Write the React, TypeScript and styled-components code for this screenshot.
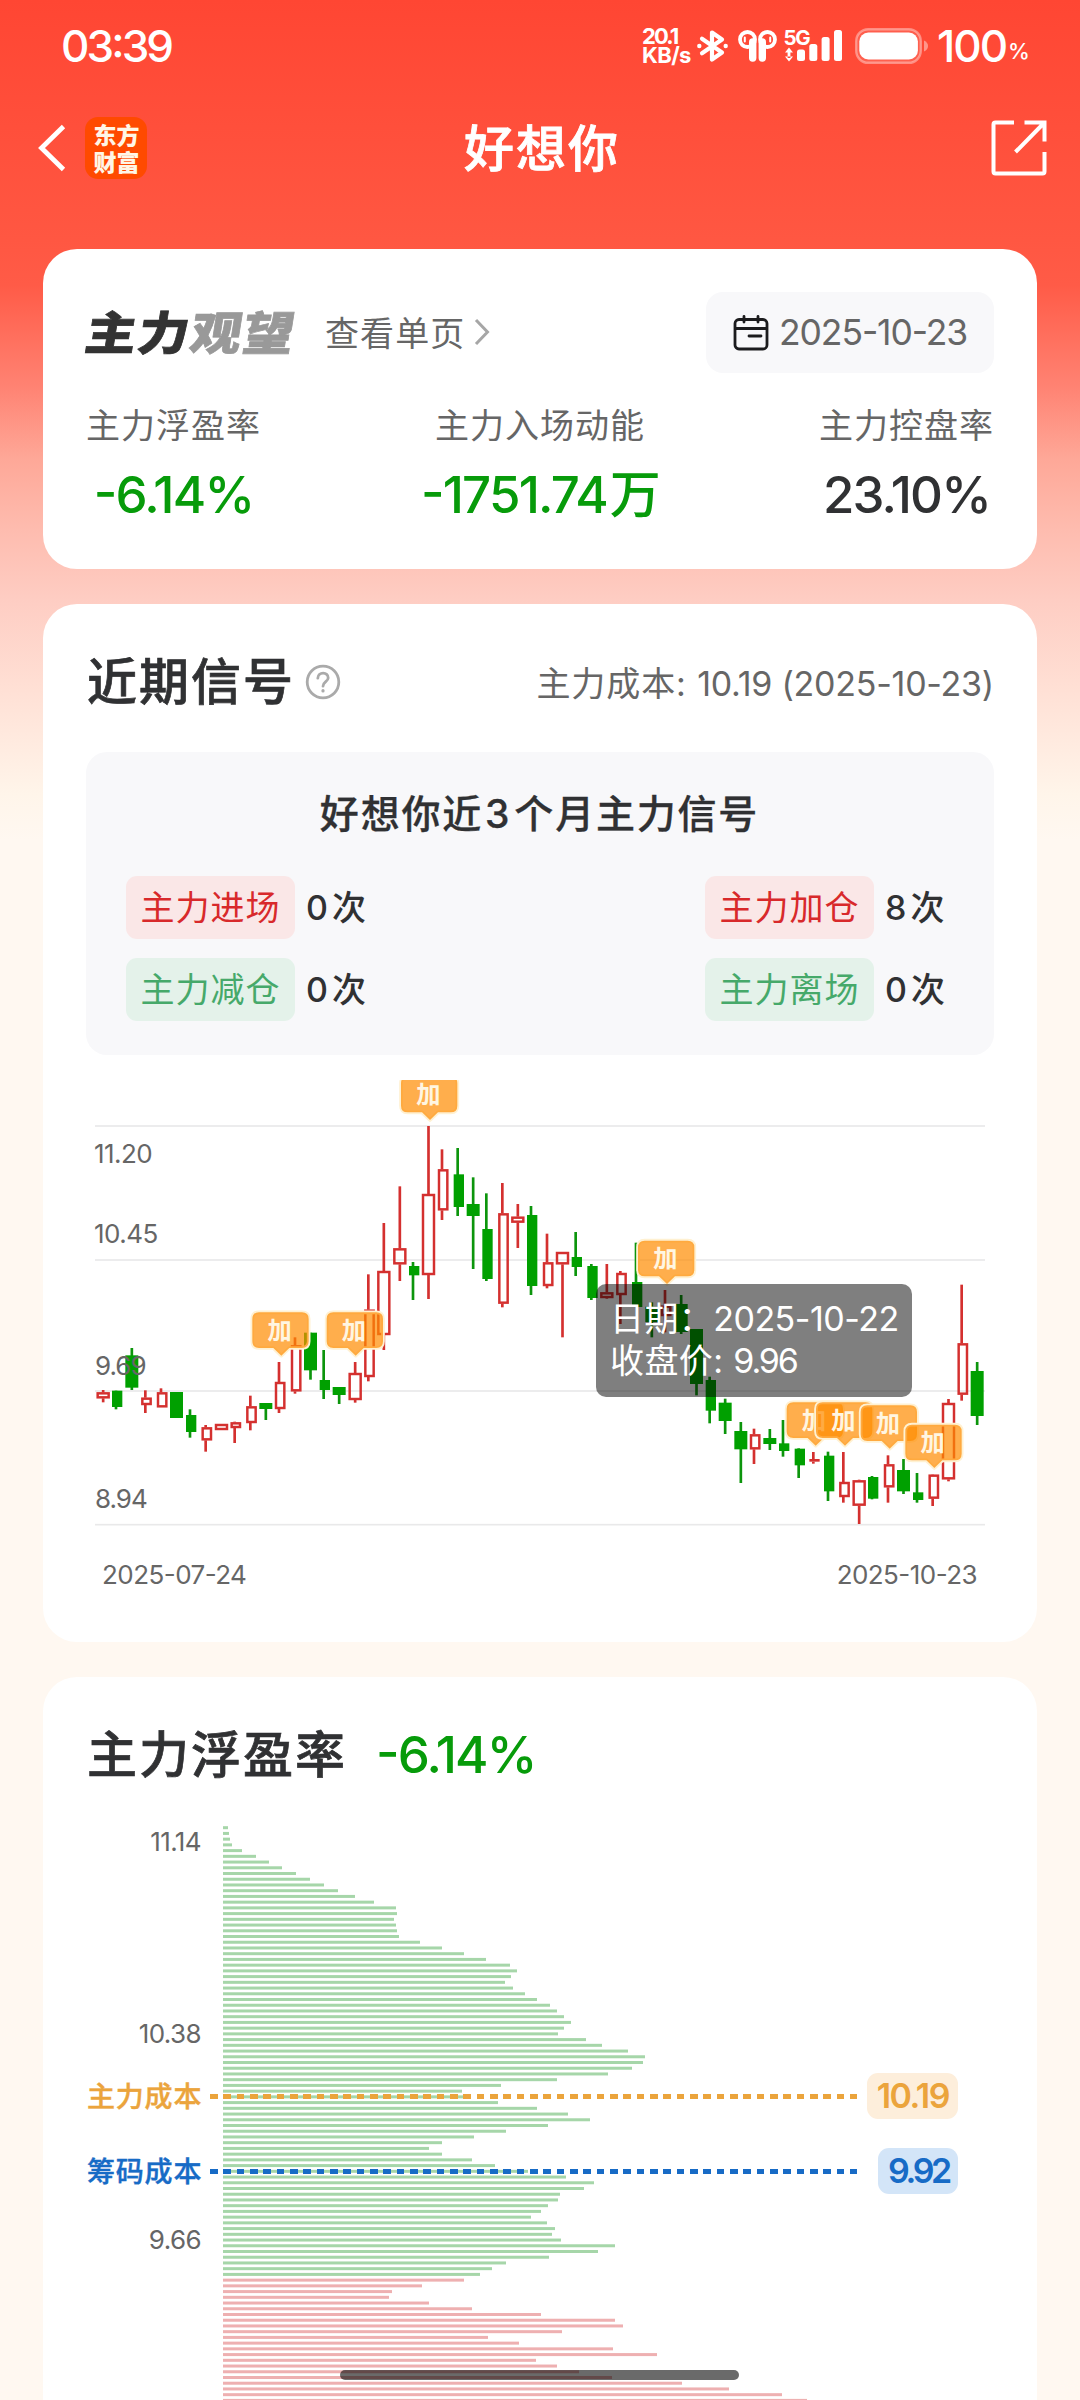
import React from 'react';
import styled, { createGlobalStyle } from 'styled-components';

const sans = '"Inter", "Noto Sans CJK SC", sans-serif';
const GREEN = '#079b0a';
const RED = '#d4302f';
const INK = '#303133';
const GREY = '#666';

const GlobalStyle = createGlobalStyle`
  * { box-sizing: border-box; }
  body { margin: 0; font-family: ${sans}; color: ${INK}; }
`;

const Page = styled.div`
  position: relative;
  width: 1080px;
  height: 2400px;
  overflow: hidden;
  background: linear-gradient(
    180deg,
    #ff4633 0px, #ff5742 240px, #ff5b47 285px, #ff8272 385px,
    #fea898 460px, #febcaf 530px, #fecdc3 600px, #ffe0d5 690px,
    #fff5ea 795px, #fff8f1 840px, #fff8f1 2400px
  );
`;

/* ---------- status bar ---------- */
const StatusBar = styled.div`
  display: flex;
  align-items: center;
  justify-content: space-between;
  height: 91px;
  padding: 0 53px 0 61px;
  color: #fff;
`;
const Clock = styled.span`
  font-size: 44px;
  font-weight: 500;
  letter-spacing: -2.9px;
  font-feature-settings: "case";
`;
const StatusIcons = styled.div`
  display: flex;
  align-items: center;
`;
const NetSpeed = styled.div`
  width: 48px;
  margin-right: 7px;
  font-size: 22px;
  line-height: 19px;
  font-weight: 700;
  white-space: nowrap;
`;
const SpeedLine = styled.div<{ $track: number }>`
  letter-spacing: ${(p) => p.$track}px;
`;
const StatusSvg = styled.svg<{ $gap: number }>`
  display: block;
  flex: none;
  overflow: visible;
  margin-right: ${(p) => p.$gap}px;
`;
const Percent = styled.span`
  display: flex;
  align-items: baseline;
  width: 90px;
  font-size: 44px;
  font-weight: 500;
  letter-spacing: -2px;
`;
const PercentSign = styled.span`
  margin-left: 2px;
  font-size: 22px;
  letter-spacing: 0;
  transform: translateY(-3px);
`;

/* ---------- header ---------- */
const Header = styled.header`
  display: grid;
  grid-template-columns: 1fr auto 1fr;
  align-items: center;
  height: 113px;
  margin-bottom: 45px;
  padding: 0 33px 0 37px;
`;
const HeaderLeft = styled.div`
  display: flex;
  align-items: center;
  gap: 17px;
`;
const AppLogo = styled.div`
  display: flex;
  flex-direction: column;
  justify-content: center;
  width: 62px;
  height: 62px;
  padding-left: 1px;
  border-radius: 13px;
  background: #ff4a00;
  color: #fff6e6;
  font: 900 23px/27px "Noto Sans CJK SC", sans-serif;
  text-align: center;
`;
const Title = styled.h1`
  margin: 0;
  padding-bottom: 5px;
  color: #fff;
  font-size: 50px;
  font-weight: 500;
  letter-spacing: 2px;
  -webkit-text-stroke: 0.8px currentColor;
`;
const HeaderRight = styled.div`
  display: flex;
  justify-content: flex-end;
`;

/* ---------- cards ---------- */
const Cards = styled.main`
  display: flex;
  flex-direction: column;
  gap: 35px;
  padding: 0 43px;
`;
const Card = styled.section<{ $bottom?: number }>`
  padding: 43px 43px ${(p) => p.$bottom ?? 0}px;
  border-radius: 34px;
  background: #fff;
`;
const Row = styled.div<{ $height: number }>`
  display: flex;
  align-items: center;
  justify-content: space-between;
  height: ${(p) => p.$height}px;
`;
const Group = styled.div<{ $gap: number }>`
  display: flex;
  align-items: center;
  gap: ${(p) => p.$gap}px;
`;

const StateMark = styled.div`
  width: 212px;
  padding-bottom: 5px;
  font: 900 51px/60px "Noto Sans CJK SC", sans-serif;
  letter-spacing: 1.5px;
  color: #333;
  white-space: nowrap;
  -webkit-text-stroke: 0.8px currentColor;
  transform: skewX(-9deg) scaleY(0.9);
`;
const Faded = styled.span`
  color: #999;
`;
const PageLink = styled.a`
  display: flex;
  align-items: center;
  gap: 9px;
  padding-bottom: 2px;
  color: ${GREY};
  font-size: 34px;
  letter-spacing: 1.1px;
`;
const DatePill = styled.div`
  display: flex;
  align-items: center;
  gap: 10px;
  width: 288px;
  height: 81px;
  padding-left: 27px;
  border-radius: 17px;
  background: #f8f8fa;
  color: ${GREY};
  font-size: 35.5px;
  letter-spacing: -1.1px;
  font-feature-settings: "case";
  white-space: nowrap;
`;

const Metrics = styled.div`
  display: flex;
  justify-content: space-between;
  margin-top: 29px;
`;
const Metric = styled.div`
  display: flex;
  flex-direction: column;
  align-items: center;
  gap: 15px;
`;
const MetricLabel = styled.div`
  color: ${GREY};
  font-size: 34px;
  line-height: 48px;
  letter-spacing: 1px;
`;
const MetricValue = styled.div<{ $color: string }>`
  color: ${(p) => p.$color};
  font-size: 51px;
  font-weight: 500;
  line-height: 60px;
  letter-spacing: -1.8px;
  font-feature-settings: "case";
  white-space: nowrap;
`;
const Unit = styled.span`
  margin-left: 3px;
`;

const SectionTitle = styled.h2`
  margin: 0;
  padding-left: 1px;
  font-size: 50px;
  font-weight: 500;
  letter-spacing: 2px;
  line-height: 70px;
  -webkit-text-stroke: 0.7px currentColor;
`;
const CostNote = styled.div`
  padding-bottom: 2px;
  color: ${GREY};
  font-size: 34px;
  letter-spacing: 0.9px;
`;
const Tight = styled.span`
  letter-spacing: -0.25px;
`;

/* ---------- signal summary ---------- */
const Panel = styled.div`
  margin-top: 35px;
  padding: 37px 49px 34px 40px;
  border-radius: 21px;
  background: #f8f8fa;
`;
const PanelTitle = styled.div`
  margin-bottom: 37px;
  padding-left: 8px;
  font-size: 39px;
  font-weight: 500;
  line-height: 50px;
  letter-spacing: 1.8px;
  text-align: center;
  -webkit-text-stroke: 0.3px currentColor;
`;
const Months = styled.span`
  margin: 0 3px 0 2px;
`;
const SignalGrid = styled.div`
  display: grid;
  grid-template-columns: auto auto;
  justify-content: space-between;
  row-gap: 19px;
`;
const Tag = styled.span<{ $kind: 'in' | 'out' }>`
  width: 169px;
  height: 63px;
  border-radius: 11px;
  background: ${(p) => (p.$kind === 'in' ? '#fae7e7' : '#e4f2ea')};
  color: ${(p) => (p.$kind === 'in' ? '#d8292b' : '#46a96a')};
  font-size: 34px;
  line-height: 64px;
  letter-spacing: 1px;
  text-align: center;
`;
const Count = styled.span`
  display: flex;
  align-items: baseline;
  gap: 4px;
  width: 60px;
  font-size: 34px;
  font-weight: 500;
  line-height: 63px;
`;

/* ---------- charts ---------- */
const ChartBox = styled.div<{ $top: number; $height: number }>`
  position: relative;
  height: ${(p) => p.$height}px;
  margin-top: ${(p) => p.$top}px;
`;
const ChartSvg = styled.svg`
  display: block;
  font-family: ${sans};
`;
const Tooltip = styled.div`
  position: absolute;
  left: 510px;
  top: 204px;
  width: 316px;
  height: 113px;
  padding: 14px 0 0 14px;
  border-radius: 10px;
  background: rgba(0, 0, 0, 0.5);
  color: #fff;
  font-size: 34px;
  line-height: 42px;
  letter-spacing: -0.5px;
  white-space: nowrap;
`;
const Wide = styled.span`
  letter-spacing: 0.4px;
`;
const Price = styled.span`
  letter-spacing: -2.2px;
`;
const DateAxis = styled.div`
  display: flex;
  justify-content: space-between;
  margin-top: 27px;
  padding: 0 17px 0 16px;
  color: ${GREY};
  font-size: 26px;
  line-height: 36px;
  letter-spacing: -0.55px;
  font-feature-settings: "case";
`;
const CostLine = styled.div<{ $top: number; $color: string }>`
  position: absolute;
  left: 0;
  top: ${(p) => p.$top}px;
  display: flex;
  align-items: center;
  width: 872px;
  height: 46px;
  color: ${(p) => p.$color};
`;
const CostLabel = styled.span`
  width: 124px;
  padding: 0 0 2px 1px;
  font-size: 28px;
  font-weight: 500;
  letter-spacing: 0.8px;
  white-space: nowrap;
  -webkit-text-stroke: 0.4px currentColor;
`;
const Dashes = styled.span`
  width: 647px;
  height: 5px;
  background: repeating-linear-gradient(90deg, currentColor 0 7.7px, transparent 7.7px 13.33px);
`;
const CostBadge = styled.span<{ $bg: string; $track: number }>`
  margin-left: auto;
  padding: 0 9px 0 10px;
  border-radius: 11px;
  background: ${(p) => p.$bg};
  font-size: 34px;
  font-weight: 600;
  line-height: 46px;
  letter-spacing: ${(p) => p.$track}px;
`;
const HomeIndicator = styled.div`
  position: absolute;
  left: 340px;
  top: 2370px;
  width: 399px;
  height: 10px;
  border-radius: 5px;
  background: rgba(0, 0, 0, 0.585);
`;

/* Candles on a 3x grid: left edge, body width, high, body top, body bottom, low, rising */
type Candle = [number, number, number, number, number, number, 0 | 1];
const W = 39;
const N = 31;
const candles: Candle[] = [
  [50, W, 990, 997, 1015, 1027, 1], [96, N, 992, 992, 1041, 1048, 0], [136, W, 864, 886, 983, 990, 0],
  [184, N, 991, 1013, 1035, 1059, 1], [231, N, 985, 997, 1042, 1042, 1], [270, W, 996, 996, 1074, 1074, 0],
  [318, N, 1048, 1065, 1116, 1133, 0], [365, N, 1095, 1102, 1141, 1175, 1], [405, W, 1092, 1092, 1110, 1110, 1],
  [452, N, 1085, 1087, 1104, 1149, 1], [499, N, 1007, 1039, 1089, 1111, 1], [538, W, 1029, 1029, 1047, 1080, 0],
  [585, N, 906, 966, 1047, 1059, 1], [633, N, 832, 856, 994, 1001, 1], [672, W, 818, 818, 931, 959, 0],
  [719, N, 870, 960, 990, 1017, 0], [758, W, 981, 981, 1005, 1032, 0], [806, W, 906, 939, 1020, 1028, 1],
  [853, N, 643, 749, 951, 964, 1], [892, W, 489, 633, 825, 870, 1], [940, W, 379, 565, 613, 663, 1],
  [987, N, 606, 618, 646, 720, 0], [1026, W, 198, 402, 645, 717, 1], [1074, N, 268, 328, 451, 480, 1],
  [1121, N, 264, 343, 441, 468, 0], [1160, W, 352, 432, 468, 627, 0], [1207, N, 400, 507, 657, 663, 0],
  [1255, N, 369, 460, 731, 742, 1], [1294, W, 432, 470, 488, 564, 1], [1341, N, 438, 465, 678, 705, 0],
  [1389, N, 521, 607, 678, 685, 1], [1428, W, 576, 576, 613, 832, 1], [1475, N, 516, 591, 621, 648, 0],
  [1522, N, 612, 618, 714, 720, 0], [1561, W, 612, 697, 714, 716, 1], [1609, N, 633, 639, 705, 792, 1],
  [1656, N, 548, 666, 741, 741, 0], [1696, W, 727, 740, 786, 832, 0], [1743, N, 690, 737, 768, 817, 1],
  [1784, W, 705, 732, 816, 822, 0], [1830, W, 807, 807, 972, 1006, 0], [1877, N, 950, 960, 1052, 1090, 0],
  [1916, W, 1016, 1028, 1083, 1122, 0], [1963, W, 1086, 1113, 1168, 1269, 0], [2010, N, 1106, 1123, 1168, 1212, 1],
  [2050, W, 1107, 1134, 1152, 1170, 0], [2097, N, 1080, 1150, 1173, 1190, 0], [2144, N, 1165, 1166, 1216, 1254, 0],
  [2188, N, 1176, 1197, 1205, 1211, 1], [2232, N, 1175, 1187, 1294, 1323, 0], [2278, N, 1176, 1266, 1311, 1328, 1],
  [2318, W, 1259, 1261, 1337, 1392, 1], [2364, N, 1248, 1251, 1316, 1318, 0], [2412, N, 1186, 1213, 1282, 1328, 1],
  [2451, W, 1197, 1230, 1294, 1302, 0], [2499, N, 1239, 1297, 1320, 1328, 0], [2546, N, 1243, 1244, 1316, 1338, 1],
  [2586, W, 1017, 1029, 1258, 1264, 1], [2633, N, 674, 850, 1004, 1022, 1], [2672, W, 906, 933, 1068, 1095, 0],
];

const pins: [number, number][] = [
  [517, 757], [740, 757], [963, 50], [1674, 542], [2120, 1027], [2208, 1027], [2342, 1036], [2476, 1094],
];

function CandleStick({ c }: { c: Candle }) {
  const [x, w, high, top, bottom, low, rising] = c;
  const cx = w === W ? x + w / 2 : x + 12;
  if (!rising) {
    return (
      <g fill="#00a000">
        <rect x={cx - 4} y={high} width={8} height={low - high} fill="#0c950c" />
        <rect x={x} y={top} width={w} height={bottom - top} />
      </g>
    );
  }
  return (
    <g fill={RED}>
      <rect x={cx - 4} y={high} width={8} height={Math.max(0, top - high)} />
      <rect x={cx - 4} y={bottom} width={8} height={Math.max(0, low - bottom)} />
      {bottom - top > 8 ? (
        <rect x={x + 3} y={top + 3} width={w - 6} height={bottom - top - 6} fill="none" stroke={RED} strokeWidth={7.4} />
      ) : (
        <rect x={x} y={top} width={w} height={bottom - top} />
      )}
    </g>
  );
}

function Pin({ x, y }: { x: number; y: number }) {
  const d =
    'M20 0H149Q169 0 169 20V87Q169 107 149 107H111L87 130L63 107H20Q0 107 0 87V20Q0 0 20 0Z';
  return (
    <g transform={`translate(${x} ${y})`}>
      <path d={d} fill="none" stroke="#fff1d2" strokeWidth={11} strokeLinejoin="round" />
      <path d={d} fill="#ff8c00" fillOpacity={0.7} />
      <text x={82} y={80} textAnchor="middle" fontSize={73} fontWeight={700} fill="#fff6e2">加</text>
    </g>
  );
}

function CandleChart() {
  return (
    <ChartSvg width={908} height={450} viewBox="18 60 2724 1350">
      {[198, 600, 993, 1394].map((y) => (
        <rect key={y} x={45} y={y - 2.5} width={2670} height={5} fill="#e9e9ea" />
      ))}
      {candles.map((c) => <CandleStick key={c[0]} c={c} />)}
      {pins.map(([x, y]) => <Pin key={x} x={x} y={y} />)}
      <g fill={GREY} fontSize={78} letterSpacing={-1.6}>
        <text x={42} y={308}>11.20</text>
        <text x={42} y={548}>10.45</text>
        <text x={45} y={944} letterSpacing={-3}>9.69</text>
        <text x={45} y={1343} letterSpacing={-3}>8.94</text>
      </g>
    </ChartSvg>
  );
}

const bars = [
  5, 6, 7, 9, 19, 33, 46, 59, 73, 87, 101, 115, 132, 151, 173, 174, 171, 173, 174, 176, 197, 219, 241, 263, 287,
  294, 288, 282, 290, 302, 314, 327, 334, 341, 348, 341, 335, 363, 379, 405, 422, 420, 409, 385, 334, 278, 239,
  246, 275, 314, 345, 367, 325, 283, 251, 219, 206, 219, 249, 272, 305, 343, 371, 361, 337, 335, 325, 318, 308,
  324, 332, 329, 338, 392, 375, 326, 283, 269, 257, 241, 199, 169, 166, 206, 249, 318, 392, 400, 339, 265, 296,
  390, 434, 313, 334, 356, 389, 459, 506, 559, 584,
];
const FIRST_RED = 79;

function ChipProfile() {
  return (
    <ChartSvg width={908} height={620} viewBox="0 0 908 620">
      {bars.map((w, i) => (
        <rect key={i} x={137} y={6.2 + i * 5.727} width={w} height={3} fill={i < FIRST_RED ? '#a6d6a9' : '#eeb0b1'} />
      ))}
      <g fill={GREY} fontSize={26} letterSpacing={-0.6} textAnchor="end">
        <text x={115} y={31}>11.14</text>
        <text x={115} y={222.5}>10.38</text>
        <text x={115} y={429}>9.66</text>
      </g>
    </ChartSvg>
  );
}

function BluetoothIcon() {
  return (
    <StatusSvg $gap={10} width={31} height={32} viewBox="0 0 31 32" fill="none" stroke="#fff" strokeWidth={4.2} strokeLinecap="round" strokeLinejoin="round">
      <path d="M5 8.8L25 22.5L15 29.5V2.5L25 9.5L5 23.2" />
      <circle cx={2.3} cy={16} r={2.2} fill="#fff" stroke="none" />
      <circle cx={28.7} cy={16} r={2.2} fill="#fff" stroke="none" />
    </StatusSvg>
  );
}

function EarbudsIcon() {
  return (
    <StatusSvg $gap={7} width={39} height={32} viewBox="0 0 39 32" fill="none" stroke="#fff">
      <circle cx={9.5} cy={9.5} r={7.5} strokeWidth={3.8} />
      <circle cx={29.5} cy={9.5} r={7.5} strokeWidth={3.8} />
      <path d="M14.7 12V28M24.3 12V28" strokeWidth={7.4} strokeLinecap="round" />
      <path d="M6.8 7.5V11.5M32.2 7.5V11.5" strokeWidth={2} strokeLinecap="round" />
    </StatusSvg>
  );
}

function SignalIcon() {
  return (
    <StatusSvg $gap={13} width={58} height={33} viewBox="0 0 58 33" fill="#fff">
      <text x={-0.5} y={16} fontFamily='"Inter", sans-serif' fontSize={20.5} fontWeight={700} letterSpacing={-1.4}>5G</text>
      <path d="M5 18.5L9 23.5H1ZM5 32.5L9 27.5H1ZM3.6 22H6.4V29H3.6Z" />
      <rect x={13} y={20.5} width={8} height={11.5} rx={2.5} />
      <rect x={25.3} y={15} width={8} height={17} rx={2.5} />
      <rect x={37.6} y={8} width={8} height={24} rx={2.5} />
      <rect x={50} y={1} width={8} height={31} rx={2.5} />
    </StatusSvg>
  );
}

function BatteryIcon() {
  return (
    <StatusSvg $gap={8} width={74} height={36} viewBox="0 0 74 36">
      <rect x={1.2} y={1.2} width={64.6} height={33.6} rx={12} fill="#fff" fillOpacity={0.12} stroke="#fff" strokeOpacity={0.38} strokeWidth={2.4} />
      <rect x={4.3} y={4.5} width={58.6} height={27} rx={9} fill="#fff" />
      <path d="M69 12.5Q73 14.5 73 18T69 23.5Z" fill="#fff" fillOpacity={0.42} />
    </StatusSvg>
  );
}

function SignalItem({ kind, label, count }: { kind: 'in' | 'out'; label: string; count: number }) {
  return (
    <Group $gap={11}>
      <Tag $kind={kind}>{label}</Tag>
      <Count><span>{count}</span><span>次</span></Count>
    </Group>
  );
}

export default function App() {
  return (
    <Page>
      <GlobalStyle />
      <StatusBar>
        <Clock>03:39</Clock>
        <StatusIcons>
          <NetSpeed>
            <SpeedLine $track={-1.9}>20.1</SpeedLine>
            <SpeedLine $track={-0.6}>KB/s</SpeedLine>
          </NetSpeed>
          <BluetoothIcon />
          <EarbudsIcon />
          <SignalIcon />
          <BatteryIcon />
          <Percent>100<PercentSign>%</PercentSign></Percent>
        </StatusIcons>
      </StatusBar>

      <Header>
        <HeaderLeft>
          <svg width={31} height={48} viewBox="0 0 31 48" fill="none" stroke="#fff" strokeWidth={4.8}>
            <path d="M26.5 2.5L4.5 24L26.5 45.5" />
          </svg>
          <AppLogo><span>东方</span><span>财富</span></AppLogo>
        </HeaderLeft>
        <Title>好想你</Title>
        <HeaderRight>
          <svg width={56} height={56} viewBox="0 0 56 56" fill="none" stroke="#fff" strokeWidth={4}>
            <path d="M23 2.5H4.5Q2.5 2.5 2.5 4.5V51.5Q2.5 53.5 4.5 53.5H51.5Q53.5 53.5 53.5 51.5V32" />
            <path d="M33.5 2.5H53.5V21.5M53 3L24.5 32" />
          </svg>
        </HeaderRight>
      </Header>

      <Cards>
        <Card $bottom={44}>
          <Row $height={81}>
            <Group $gap={27}>
              <StateMark>主力<Faded>观望</Faded></StateMark>
              <PageLink>
                查看单页
                <svg width={16} height={28} viewBox="0 0 16 28" fill="none" stroke="#a6a6a6" strokeWidth={3}>
                  <path d="M2 2L13.5 14L2 26" />
                </svg>
              </PageLink>
            </Group>
            <DatePill>
              <svg width={36} height={36} viewBox="0 0 36 36" fill="none" stroke="#1c1c1e" strokeWidth={2.8} strokeLinecap="round">
                <rect x={2} y={4.5} width={32} height={29.5} rx={4} />
                <path d="M2.5 13.5H33.5M11 1.5V7M25 1.5V7M16 21H28" />
              </svg>
              2025-10-23
            </DatePill>
          </Row>
          <Metrics>
            <Metric>
              <MetricLabel>主力浮盈率</MetricLabel>
              <MetricValue $color={GREEN}>-6.14%</MetricValue>
            </Metric>
            <Metric>
              <MetricLabel>主力入场动能</MetricLabel>
              <MetricValue $color={GREEN}>-1751.74<Unit>万</Unit></MetricValue>
            </Metric>
            <Metric>
              <MetricLabel>主力控盘率</MetricLabel>
              <MetricValue $color={INK}>23.10%</MetricValue>
            </Metric>
          </Metrics>
        </Card>

        <Card $bottom={49}>
          <Row $height={70}>
            <Group $gap={9}>
              <SectionTitle>近期信号</SectionTitle>
              <svg width={38} height={38} viewBox="0 0 38 38" fill="none" stroke="#aaa" strokeWidth={2.8} strokeLinecap="round">
                <circle cx={19} cy={19} r={15.8} />
                <path d="M13.8 15.2C14 8.2 24.4 8.6 24.2 15C24 18.6 19 18.8 19 23.2" />
                <path d="M19 27.6V27.9" strokeWidth={3.2} />
              </svg>
            </Group>
            <CostNote>主力成本: <Tight>10.19 (2025-10-23)</Tight></CostNote>
          </Row>
          <Panel>
            <PanelTitle>好想你近<Months>3</Months>个月主力信号</PanelTitle>
            <SignalGrid>
              <SignalItem kind="in" label="主力进场" count={0} />
              <SignalItem kind="in" label="主力加仓" count={8} />
              <SignalItem kind="out" label="主力减仓" count={0} />
              <SignalItem kind="out" label="主力离场" count={0} />
            </SignalGrid>
          </Panel>
          <ChartBox $top={25} $height={450}>
            <CandleChart />
            <Tooltip>
              <div><Wide>日期：</Wide>2025-10-22</div>
              <div><Wide>收盘价: </Wide><Price>9.96</Price></div>
            </Tooltip>
          </ChartBox>
          <DateAxis><span>2025-07-24</span><span>2025-10-23</span></DateAxis>
        </Card>

        <Card>
          <Group $gap={29}>
            <SectionTitle>主力浮盈率</SectionTitle>
            <MetricValue $color={GREEN}>-6.14%</MetricValue>
          </Group>
          <ChartBox $top={30} $height={620}>
            <ChipProfile />
            <CostLine $top={253} $color="#eba43c">
              <CostLabel>主力成本</CostLabel>
              <Dashes />
              <CostBadge $bg="#fdeedb" $track={-1.5}>10.19</CostBadge>
            </CostLine>
            <CostLine $top={328} $color="#176bc6">
              <CostLabel>筹码成本</CostLabel>
              <Dashes />
              <CostBadge $bg="#d3e5f8" $track={-3.3}>9.92</CostBadge>
            </CostLine>
          </ChartBox>
        </Card>
      </Cards>
      <HomeIndicator />
    </Page>
  );
}
